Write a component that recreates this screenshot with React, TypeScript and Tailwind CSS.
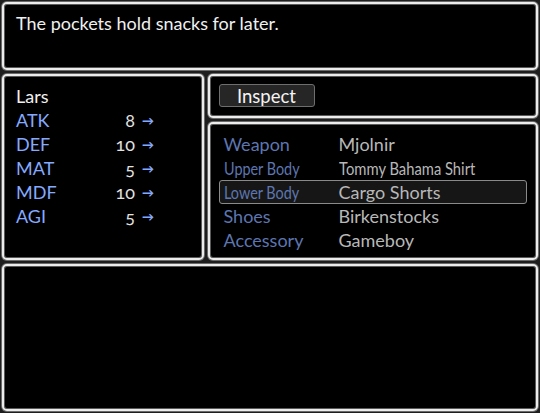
import React from 'react';

const stats = [
  { label: 'ATK', value: '8' },
  { label: 'DEF', value: '10' },
  { label: 'MAT', value: '5' },
  { label: 'MDF', value: '10' },
  { label: 'AGI', value: '5' },
];

const slots = [
  { slot: 'Weapon', item: 'Mjolnir', squeezeSlot: false, squeezeItem: false },
  { slot: 'Upper Body', item: 'Tommy Bahama Shirt', squeezeSlot: true, squeezeItem: true },
  { slot: 'Lower Body', item: 'Cargo Shorts', squeezeSlot: true, squeezeItem: false, selected: true },
  { slot: 'Shoes', item: 'Birkenstocks', squeezeSlot: false, squeezeItem: false },
  { slot: 'Accessory', item: 'Gameboy', squeezeSlot: false, squeezeItem: false },
];

const Frame: React.FC<{ className?: string; children?: React.ReactNode }> = ({ className = '', children }) => (
  <div className={`p-[2px] ${className}`}>
    <div className="h-full rounded-[5px] border-2 border-[#ececec] bg-black shadow-[0_0_0_1px_#6a6a6a,inset_0_0_0_1px_#5a5a5a]">
      {children}
    </div>
  </div>
);

export default function App() {
  return (
    <div
      className="w-[540px] h-[413px] bg-[#1e1e1e] flex flex-col overflow-hidden text-[18px] leading-[24px] text-[#f0f0f0]"
      style={{ fontFamily: 'Lato, "Noto Sans", sans-serif' }}
    >
      {/* help window */}
      <Frame className="h-[72px]">
        <div className="px-[12px] pt-[7px]">The pockets hold snacks for later.</div>
      </Frame>

      <div className="flex h-[190px]">
        {/* status window */}
        <Frame className="w-[206px]">
          <div className="px-[12px] pt-[8px]">
            <div className="h-[24px]">Lars</div>
            {stats.map((s) => (
              <div key={s.label} className="flex h-[24px] items-center">
                <span className="w-[90px] text-[#84aaff]">{s.label}</span>
                <span className="w-[29px] text-right text-[#e2e2e2] oldstyle-nums">{s.value}</span>
                <span className="ml-[7px] pt-[2px] text-[12px] font-black text-[#84aaff]">→</span>
              </div>
            ))}
          </div>
        </Frame>

        <div className="flex flex-1 flex-col">
          {/* command window */}
          <Frame className="h-[48px]">
            <div className="pl-[8.5px] pt-[8px]">
              <div className="flex h-[23px] w-[96px] items-center justify-center rounded-[3px] border border-[#6e6e6e] bg-[#262626] text-[18.5px] text-[#f4f4f4]">
                Inspect
              </div>
            </div>
          </Frame>

          {/* slot window */}
          <Frame className="flex-1">
            <div className="pl-[8.5px] pr-[9px] pt-[8px]">
              {slots.map((r) => (
                <div
                  key={r.slot}
                  className={`flex h-[24px] items-center whitespace-nowrap px-[4px] ${
                    r.selected ? 'rounded-[3px] border border-[#8a8a8a] bg-[#161616]' : 'border border-transparent'
                  }`}
                >
                  <span className="w-[115px] text-[#5d76b0]">
                    <span className={`inline-block origin-left ${r.squeezeSlot ? 'scale-x-[0.8]' : ''}`}>{r.slot}</span>
                  </span>
                  <span className="text-[#b8b8b8]">
                    <span className={`inline-block origin-left ${r.squeezeItem ? 'scale-x-[0.82]' : ''}`}>{r.item}</span>
                  </span>
                </div>
              ))}
            </div>
          </Frame>
        </div>
      </div>

      {/* item window */}
      <Frame className="flex-1" />
    </div>
  );
}
